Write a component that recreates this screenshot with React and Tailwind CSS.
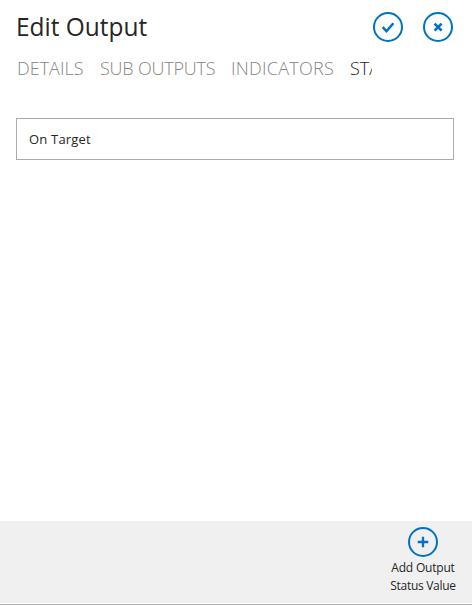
import React from 'react';

const tabs = [
  { label: 'DETAILS', box: 'w-[83px]', text: 'text-[#858585]' },
  { label: 'SUB OUTPUTS', box: 'w-[131px] tracking-[-0.2px]', text: 'text-[#858585]' },
  { label: 'INDICATORS', box: 'w-[119px] tracking-[0.25px]', text: 'text-[#858585]' },
  { label: 'STATUS', box: 'w-[80px]', text: 'text-[#222222]' },
];

function CircleIcon({ children }) {
  return (
    <svg className="block size-[30px] shrink-0" viewBox="0 0 30 30" fill="none" stroke="#0072c6" strokeWidth="2">
      <circle cx="15" cy="15" r="14" />
      {children}
    </svg>
  );
}

export default function App() {
  return (
    <div className="flex h-[605px] w-[472px] flex-col overflow-hidden bg-white font-['Open_Sans','Noto_Sans',sans-serif] text-[#262626]">
      <header className="flex h-[52px] shrink-0 items-start justify-between pl-4 pr-[19px]">
        <h1 className="origin-left scale-x-[0.94] pt-2 text-[26px] leading-9 whitespace-nowrap">Edit Output</h1>
        <div className="flex gap-5 pt-3">
          <button aria-label="Save">
            <CircleIcon>
              <path d="M9.7 15.2 13.4 19.2 20.4 11.2" strokeWidth="2.5" />
            </CircleIcon>
          </button>
          <button aria-label="Close">
            <CircleIcon>
              <path d="M11.6 11.6 18.6 18.6M18.6 11.6 11.6 18.6" strokeWidth="2.7" />
            </CircleIcon>
          </button>
        </div>
      </header>
      <nav className="flex h-[66px] w-[372px] shrink-0 overflow-hidden pl-[17px] pt-0.5 text-[18px] leading-7 font-light">
        {tabs.map((tab) => (
          <div key={tab.label} className={`${tab.box} ${tab.text} shrink-0 whitespace-nowrap`}>
            {tab.label}
          </div>
        ))}
      </nav>
      <main className="flex-1 pl-4 pr-[18px]">
        <div className="flex h-[42px] items-center border border-[#ababab] pt-0.5 pl-3 text-[13px] tracking-[0.2px]">On Target</div>
      </main>
      <footer className="flex h-[82px] shrink-0 justify-end bg-[#f0f0f0] pr-[9px] pt-1.5">
        <button className="flex w-20 flex-col items-center text-[12px] leading-[18px]">
          <CircleIcon>
            <path d="M15 9.7V20.3M9.7 15H20.3" strokeWidth="2.3" />
          </CircleIcon>
          <span className="mt-0.5 tracking-[-0.2px] whitespace-nowrap">Add Output</span>
          <span className="tracking-[-0.3px] whitespace-nowrap">Status Value</span>
        </button>
      </footer>
      <div className="h-px shrink-0 bg-white" />
      <div className="h-px shrink-0 bg-[#ababab]" />
    </div>
  );
}
